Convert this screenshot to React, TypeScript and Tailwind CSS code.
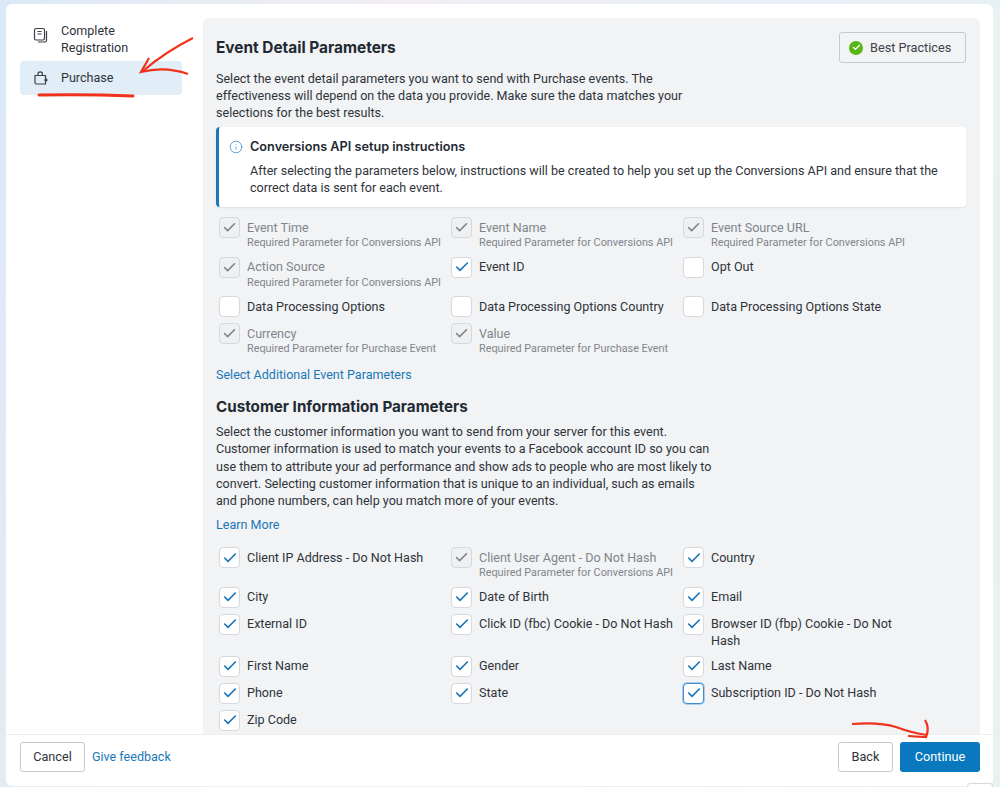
import { Check, Info } from 'lucide-react';

type Param = {
  label: string;
  sub?: string;
  state: 'locked' | 'on' | 'off' | 'focus';
};

const EVENT_PARAMS: Param[][] = [
  [
    { label: 'Event Time', sub: 'Required Parameter for Conversions API', state: 'locked' },
    { label: 'Event Name', sub: 'Required Parameter for Conversions API', state: 'locked' },
    { label: 'Event Source URL', sub: 'Required Parameter for Conversions API', state: 'locked' },
  ],
  [
    { label: 'Action Source', sub: 'Required Parameter for Conversions API', state: 'locked' },
    { label: 'Event ID', state: 'on' },
    { label: 'Opt Out', state: 'off' },
  ],
  [
    { label: 'Data Processing Options', state: 'off' },
    { label: 'Data Processing Options Country', state: 'off' },
    { label: 'Data Processing Options State', state: 'off' },
  ],
  [
    { label: 'Currency', sub: 'Required Parameter for Purchase Event', state: 'locked' },
    { label: 'Value', sub: 'Required Parameter for Purchase Event', state: 'locked' },
  ],
];

const CUSTOMER_PARAMS: Param[][] = [
  [
    { label: 'Client IP Address - Do Not Hash', state: 'on' },
    { label: 'Client User Agent - Do Not Hash', sub: 'Required Parameter for Conversions API', state: 'locked' },
    { label: 'Country', state: 'on' },
  ],
  [
    { label: 'City', state: 'on' },
    { label: 'Date of Birth', state: 'on' },
    { label: 'Email', state: 'on' },
  ],
  [
    { label: 'External ID', state: 'on' },
    { label: 'Click ID (fbc) Cookie - Do Not Hash', state: 'on' },
    { label: 'Browser ID (fbp) Cookie - Do Not Hash', state: 'on' },
  ],
  [
    { label: 'First Name', state: 'on' },
    { label: 'Gender', state: 'on' },
    { label: 'Last Name', state: 'on' },
  ],
  [
    { label: 'Phone', state: 'on' },
    { label: 'State', state: 'on' },
    { label: 'Subscription ID - Do Not Hash', state: 'focus' },
  ],
  [{ label: 'Zip Code', state: 'on' }],
];

function ParamBox({ state }: { state: Param['state'] }) {
  if (state === 'locked') {
    return (
      <span className="flex h-[21px] w-[21px] shrink-0 items-center justify-center rounded-[4px] border border-[#d5d8dc] bg-[#eef0f2]">
        <Check size={15} strokeWidth={2.3} className="text-[#7b8087]" />
      </span>
    );
  }
  if (state === 'off') {
    return <span className="h-[21px] w-[21px] shrink-0 rounded-[4px] border border-[#d5d8dc] bg-white" />;
  }
  return (
    <span
      className={
        state === 'focus'
          ? 'flex h-[21px] w-[21px] shrink-0 items-center justify-center rounded-[4px] border border-[#3f8fd0] bg-white ring-1 ring-[#a9cdea]'
          : 'flex h-[21px] w-[21px] shrink-0 items-center justify-center rounded-[4px] border border-[#d5d8dc] bg-white'
      }
    >
      <Check size={16} strokeWidth={2.4} className="text-[#1a77b8]" />
    </span>
  );
}

function ParamItem({ param }: { param: Param }) {
  const locked = param.state === 'locked';
  return (
    <div className="flex gap-[7px]">
      <ParamBox state={param.state} />
      <div className="pt-[2.5px]">
        <div className={locked ? 'text-[12.55px] leading-[16.5px] text-[#80858c]' : 'text-[12.55px] leading-[16.5px] text-[#2f343a]'}>
          {param.label}
        </div>
        {param.sub && <div className="text-[10.85px] leading-[14.5px] text-[#80858c]">{param.sub}</div>}
      </div>
    </div>
  );
}

function ParamGrid({ rows, gaps }: { rows: Param[][]; gaps: string }) {
  return (
    <div className={gaps}>
      {rows.map((row, i) => (
        <div key={i} className="grid grid-cols-[232px_232px_232px] pl-[3px]">
          {row.map((p) => (
            <ParamItem key={p.label} param={p} />
          ))}
        </div>
      ))}
    </div>
  );
}

export default function App() {
  return (
    <div className="relative h-[787px] w-[1000px] overflow-hidden bg-[linear-gradient(100deg,#dbe9f6_0%,#f3eef3_35%,#e8f0fa_70%,#e6f3ee_100%)] pl-[6px] pr-[7px] pt-[4px] font-['Roboto',sans-serif]">
      <div className="flex h-[782px] flex-col rounded-[6px] bg-white">
        {/* BODY */}
        <div className="flex min-h-0 flex-1 pl-[14px] pr-[13px] pt-[14px]">
          {/* EVENT LIST */}
          <div className="mr-[21px] w-[162px] shrink-0 pt-[4px]">
            <div className="flex gap-[12px] pl-[13px]">
              <svg width="16" height="16" viewBox="0 0 16 16" fill="none" stroke="#3d4248" strokeWidth="1.2" className="mt-[5px] shrink-0">
                <rect x="1.5" y="1.5" width="10" height="11.5" rx="1.5" />
                <path d="M13.5 4v9.5a1.5 1.5 0 0 1-1.5 1.5H5" />
                <path d="M4.5 4.5h4M4.5 7h4" />
              </svg>
              <div className="text-[12.55px] leading-[17px] text-[#2f343a]">
                Complete
                <br />
                Registration
              </div>
            </div>
            <div className="mt-[5px] flex h-[34px] items-center gap-[12px] rounded-[4px] bg-[#e1edf7] pl-[13px]">
              <svg width="16" height="16" viewBox="0 0 16 16" fill="none" stroke="#3d4248" strokeWidth="1.2" className="shrink-0">
                <path d="M2 5.5h10.5V14H3.5A1.5 1.5 0 0 1 2 12.5z" />
                <path d="M5 5.5V4a2.2 2.2 0 0 1 4.4 0v1.5" />
                <circle cx="13" cy="10" r="1.6" fill="#3d4248" stroke="none" />
              </svg>
              <span className="text-[12.55px] text-[#2f343a]">Purchase</span>
            </div>
          </div>

          {/* SETTINGS PANEL */}
          <div className="min-w-0 flex-1 overflow-hidden rounded-t-[6px] bg-[#f1f3f5] pl-[13px] pr-[14px] pt-[19px]">
            <div className="flex items-start justify-between">
              <div>
                <h2 className="font-['Inter',sans-serif] text-[15.4px] font-bold leading-[22px] text-[#1f2a33]">Event Detail Parameters</h2>
                <p className="mt-[11px] w-[470px] text-[12.55px] leading-[17px] text-[#2f343a]">
                  Select the event detail parameters you want to send with Purchase events. The effectiveness will
                  depend on the data you provide. Make sure the data matches your selections for the best results.
                </p>
              </div>
              <button className="-mt-[5px] flex h-[31px] w-[127px] items-center gap-[7px] rounded-[3px] border border-[#c6cacf] pl-[9px] text-[12.7px] text-[#3d4248]">
                <span className="flex h-[14px] w-[14px] items-center justify-center rounded-full bg-[#5ab516]">
                  <Check size={9} strokeWidth={3.5} className="text-white" />
                </span>
                Best Practices
              </button>
            </div>

            <div className="mt-[6px] rounded-[4px] border-l-[3px] border-[#1a77b8] bg-white pb-[11px] pl-[10px] pr-[12px] pt-[10px] shadow-[0_1px_2px_rgba(0,0,0,0.08)]">
              <div className="flex items-center gap-[7px]">
                <Info size={14} strokeWidth={1.4} className="text-[#3f8fd0]" />
                <span className="font-['Inter',sans-serif] text-[12.7px] font-semibold text-[#1f2a33]">Conversions API setup instructions</span>
              </div>
              <p className="mt-[6px] pl-[21px] text-[12.55px] leading-[17px] text-[#2f343a]">
                After selecting the parameters below, instructions will be created to help you set up the Conversions
                API and ensure that the correct data is sent for each event.
              </p>
            </div>

            <div className="mt-[10px]">
              <ParamGrid rows={EVENT_PARAMS} gaps="flex flex-col gap-[6px]" />
            </div>

            <a className="mt-[9.5px] block text-[12.55px] leading-[17px] text-[#1a77b8]">Select Additional Event Parameters</a>

            <h2 className="mt-[13px] font-['Inter',sans-serif] text-[15.2px] font-bold leading-[22px] text-[#1f2a33]">Customer Information Parameters</h2>
            <p className="mt-[5px] w-[500px] text-[12.55px] leading-[17.3px] text-[#2f343a]">
              Select the customer information you want to send from your server for this event. Customer information
              is used to match your events to a Facebook account ID so you can use them to attribute your ad
              performance and show ads to people who are most likely to convert. Selecting customer information that
              is unique to an individual, such as emails and phone numbers, can help you match more of your events.
            </p>
            <a className="mt-[6px] block text-[12.55px] leading-[17px] text-[#1a77b8]">Learn More</a>

            <div className="mt-[14.5px]">
              <ParamGrid rows={CUSTOMER_PARAMS} gaps="flex flex-col gap-[6.2px]" />
            </div>
          </div>
        </div>

        {/* FOOTER */}
        <div className="flex h-[52px] shrink-0 items-start justify-between border-t border-[#eceef0] pl-[14px] pr-[13px] pt-[7px]">
          <div className="flex items-center gap-[7px]">
            <button className="h-[30px] w-[65px] rounded-[3px] border border-[#c6cacf] text-[12.7px] text-[#2f343a]">Cancel</button>
            <a className="text-[12.55px] text-[#1a77b8]">Give feedback</a>
          </div>
          <div className="flex items-center gap-[7px]">
            <button className="h-[30px] w-[55px] rounded-[3px] border border-[#c6cacf] text-[12.7px] text-[#2f343a]">Back</button>
            <button className="h-[30px] w-[80px] rounded-[3px] bg-[#0a78be] text-[12.7px] text-white">Continue</button>
          </div>
        </div>
      </div>

      {/* CORNER TAB PEEKING IN AT THE BOTTOM */}
      <div className="absolute left-[967px] top-[783px] h-[10px] w-[26px] rounded-t-[3px] border border-[#d5d8dc] bg-white" />

      {/* RED MARKER ANNOTATIONS */}
      <svg width="1000" height="787" viewBox="0 0 1000 787" fill="none" className="pointer-events-none absolute left-0 top-0">
        <path d="M193 38 Q165 52 143 71" stroke="#f0311c" strokeWidth="2.2" />
        <path d="M149 58 Q145 65 141 72 Q165 66 188 74" stroke="#f0311c" strokeWidth="2.2" />
        <path d="M39 95 Q85 94 133 96" stroke="#f0311c" strokeWidth="3" strokeLinecap="round" />
        <path d="M852 724 Q880 722 896 727 Q912 733 927 735" stroke="#f0311c" strokeWidth="2.2" />
        <path d="M925 720 Q930 728 926 737 L908 736" stroke="#f0311c" strokeWidth="2.2" />
      </svg>
    </div>
  );
}
